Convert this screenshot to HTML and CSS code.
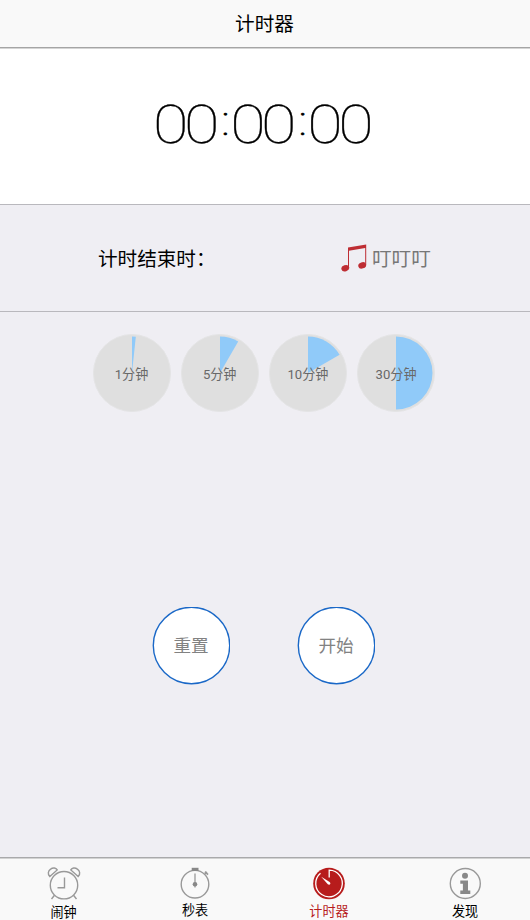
FILE: index.html
```html
<!DOCTYPE html>
<html lang="zh-CN">
<head>
<meta charset="utf-8">
<title>计时器</title>
<link rel="stylesheet" href="styles.css">
</head>
<body>
<div class="app">
  <header class="bar">计时器</header>
  <section class="display"><div class="time">00<span class="colon">:</span>00<span class="colon">:</span>00</div></section>
  <section class="sound">
    <span class="label">计时结束时：</span>
    <svg class="note" width="26" height="29" viewBox="0 0 26 29"><path d="M7 3.6 25.2.4V21h-1V4L8 6.8v17H7z" fill="#be2d33"/><ellipse cx="4.3" cy="24.2" rx="4" ry="3.1" transform="rotate(-18 4.3 24.2)" fill="#be2d33"/><ellipse cx="21.2" cy="21.4" rx="4" ry="3.1" transform="rotate(-18 21.2 21.4)" fill="#be2d33"/></svg>
    <span class="name">叮叮叮</span>
  </section>
  <main class="content">
    <div class="presets">
      <button class="preset"><svg class="pie" viewBox="0 0 78 78"><path d="M39 39V2.5A36.5 36.5 0 0 1 42.8 2.7z"/></svg><span>1分钟</span></button>
      <button class="preset"><svg class="pie" viewBox="0 0 78 78"><path d="M39 39V2.5A36.5 36.5 0 0 1 57.2 7.4z"/></svg><span>5分钟</span></button>
      <button class="preset"><svg class="pie" viewBox="0 0 78 78"><path d="M39 39V2.5A36.5 36.5 0 0 1 70.6 20.8z"/></svg><span>10分钟</span></button>
      <button class="preset"><svg class="pie" viewBox="0 0 78 78"><path d="M39 75.5V2.5A36.5 36.5 0 0 1 39 75.5z"/></svg><span>30分钟</span></button>
    </div>
    <div class="actions"><button class="action"><svg class="ring" viewBox="0 0 78 78"><circle cx="39.5" cy="38.5" r="38.2"/></svg><span>重置</span></button><button class="action"><svg class="ring" viewBox="0 0 78 78"><circle cx="39.5" cy="38.5" r="38.2"/></svg><span>开始</span></button></div>
  </main>
  <nav class="tabs">
    <a class="tab alarm"><svg width="34" height="34" viewBox="0 0 34 34" fill="none" stroke="#999" stroke-width="1.4"><circle cx="17" cy="18.2" r="13.7"/><path d="M17.5 10.5v10.2h-7M7.5 28.3 4.5 32M26.5 28.3l3 3.7"/><path d="M2.8 9.5C.3 7 1.2 3.8 3.6 2.1 6 .3 9 .8 10.2 2.9zM31.2 9.5c2.5-2.5 1.6-5.7-.8-7.4C28 .3 25 .8 23.8 2.9z"/></svg><span>闹钟</span></a>
    <a class="tab watch"><svg width="34" height="34" viewBox="0 0 34 34" fill="none" stroke="#999" stroke-width="1.4"><circle cx="17" cy="17.2" r="13.8"/><path d="M17 6.5v14" stroke-width="1.3"/><path d="m26.8 6.8 2-2M27 4.6l3 3" stroke-width="1.7"/><rect x="13.7" y=".8" width="6.8" height="3.2" fill="#888" stroke="none"/><circle cx="17" cy="17.2" r="2.3" fill="#888" stroke="none"/></svg><span>秒表</span></a>
    <a class="tab timer"><svg width="34" height="34" viewBox="0 0 34 34" fill="none"><circle cx="17" cy="16.5" r="15.8" fill="#b71c1c"/><path d="M17.2 10.5V3.2A13.3 13.3 0 1 1 8.5 6.3" stroke="#fff" stroke-width="1.3"/><path d="m9.2 9.7 8.4 5.2c1.8 1.3.2 3.9-1.8 2.4z" fill="#fff"/></svg><span>计时器</span></a>
    <a class="tab info"><svg width="34" height="34" viewBox="0 0 34 34"><circle cx="17.3" cy="16.5" r="15" fill="none" stroke="#999" stroke-width="1.4"/><circle cx="17" cy="8.8" r="3" fill="#888"/><path d="M12.3 13.4H20v10.2h2.3V27H12.3v-3.4h2.6v-6.9h-2.6z" fill="#888"/></svg><span>发现</span></a>
  </nav>
</div>
</body>
</html>
```
FILE: styles.css
```css
* { box-sizing: border-box; }
body { margin: 0; font-family: Roboto, "Noto Sans CJK SC", sans-serif; color: #000; }
button { font: inherit; border: 0; padding: 0; }
svg { display: block; flex: none; }
.app { height: 920px; display: flex; flex-direction: column; background: #efeef3; overflow: hidden; }
.bar { height: 49px; flex: none; background: #f9f9f9; border-bottom: 1px solid #d5d5d5; box-shadow: inset 0 -1px #a5a5a5; font-size: 19.6px; line-height: 49px; text-align: center; padding-right: 1px; }
.display { height: 156px; flex: none; background: #fff; border-bottom: 1px solid #b9b8bd; display: flex; justify-content: center; padding: 43px 7px 0 0; }
.time { font-size: 54px; font-weight: 100; line-height: 66px; letter-spacing: -3.8px; white-space: nowrap; transform: scaleX(1.2); -webkit-text-stroke: .3px #000; }
.colon { display: inline-block; width: 12.8px; padding-left: 5px; font-size: 40px; line-height: 40px; letter-spacing: 0; text-align: center; vertical-align: 8px; -webkit-text-stroke-width: .7px; }
.sound { height: 107px; flex: none; border-bottom: 1px solid #b9b8bd; display: flex; align-items: center; padding-left: 97px; font-size: 19.6px; }
.label { width: 244px; padding: 0 0 2px 1px; white-space: nowrap; }
.note { margin-right: 5px; }
.name { padding-bottom: 2px; color: #777; }
.content { flex: 1; }
.presets { display: flex; gap: 10.2px; padding: 22px 0 0 92.5px; }
.preset { position: relative; width: 78px; height: 78px; border-radius: 50%; background: #dfdfdf; border: 1px solid #e4e4e5; color: #686868; font-size: 13.1px; }
.pie { position: absolute; top: -1px; left: -1px; width: 78px; height: 78px; fill: #90caf9; }
.preset span { position: relative; }
.actions { display: flex; gap: 67px; padding: 195px 0 0 152px; }
.action { position: relative; width: 78px; height: 78px; padding-bottom: 3px; background: none; color: #828282; font-size: 17.6px; }
.action span { position: relative; }
.ring { position: absolute; inset: 0; fill: #fff; stroke: #1a68c7; stroke-width: 1.4px; }
.tabs { height: 63px; flex: none; display: grid; grid-template-columns: 127px 136px 132px 140px; background: #f9f9f9; border-top: 1px solid #a9a9ab; box-shadow: inset 0 1px #d2d2d2; font-size: 13.1px; line-height: 18px; }
.tab { display: flex; flex-direction: column; align-items: center; padding-top: 9px; }
.tab span { margin-top: 2px; }
.alarm span { margin-top: 3px; }
.watch span { margin-top: 1px; }
.timer { color: #b71c1c; }
```
